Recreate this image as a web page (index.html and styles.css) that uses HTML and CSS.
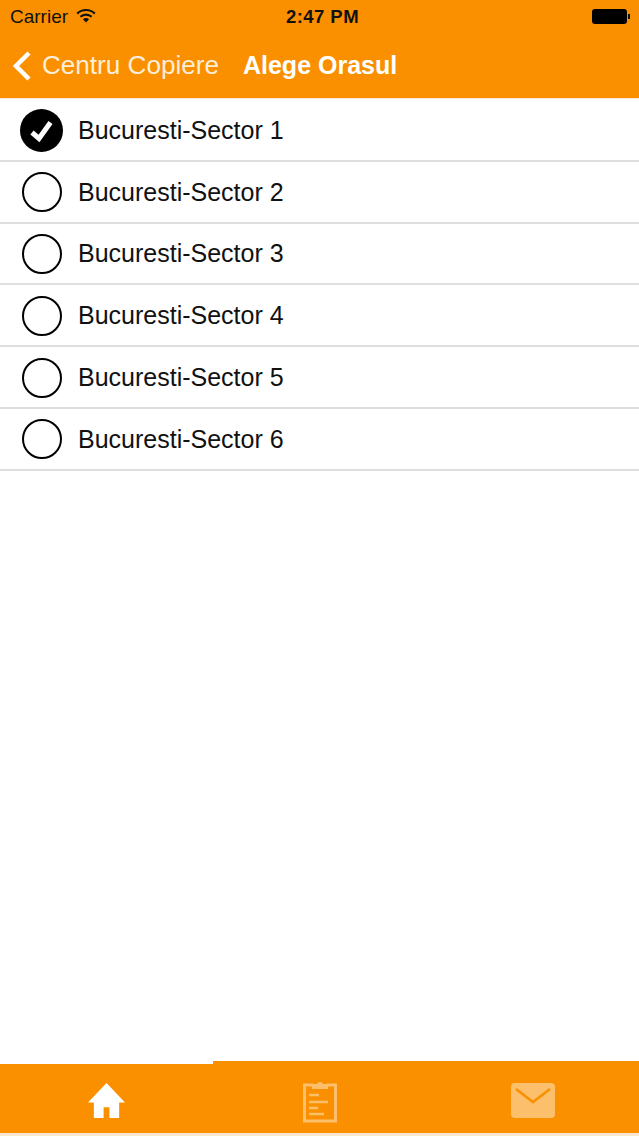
FILE: index.html
```html
<!DOCTYPE html>
<html lang="ro">
<head>
<meta charset="utf-8">
<title>Alege Orasul</title>
<link rel="stylesheet" href="styles.css">
</head>
<body>
<div class="app">
  <header class="header">
    <div class="status">
      <div class="status-left">
        <span class="carrier">Carrier</span>
        <svg class="wifi" viewBox="0 0 20 15"><path d="M1.2 5.6a12.6 12.6 0 0 1 17.6 0" fill="none" stroke="#111" stroke-width="2.2"/><path d="M4.4 8.8a8.2 8.2 0 0 1 11.2 0" fill="none" stroke="#111" stroke-width="2.2"/><path d="M6.9 11.3a4.6 4.6 0 0 1 6.2 0L10 14.6z" fill="#111"/></svg>
      </div>
      <span class="time">2:47 PM</span>
      <div class="battery"><span class="battery-body"></span><span class="battery-tip"></span></div>
    </div>
    <nav class="nav">
      <svg class="chevron" viewBox="0 0 20 30"><path d="M17 2 4 15l13 13" fill="none" stroke="#fff" stroke-width="4.5"/></svg>
      <span class="back">Centru Copiere</span>
      <span class="title">Alege Orasul</span>
    </nav>
  </header>
  <ul class="list">
    <li class="row"><span class="radio checked"><svg viewBox="0 0 43 43"><path d="M12 23.5l7 6 11.5-16" fill="none" stroke="#fff" stroke-width="5"/></svg></span><span class="label">Bucuresti-Sector 1</span></li>
    <li class="row"><span class="radio"></span><span class="label">Bucuresti-Sector 2</span></li>
    <li class="row"><span class="radio"></span><span class="label">Bucuresti-Sector 3</span></li>
    <li class="row"><span class="radio"></span><span class="label">Bucuresti-Sector 4</span></li>
    <li class="row"><span class="radio"></span><span class="label">Bucuresti-Sector 5</span></li>
    <li class="row"><span class="radio"></span><span class="label">Bucuresti-Sector 6</span></li>
  </ul>
  <footer class="tabs">
    <div class="tab tab-active">
      <svg class="icon-home" viewBox="0 0 38 38"><path d="M19 1 0 21h6v16h10V26h6v11h10V21h6z" fill="#fff"/></svg>
    </div>
    <div class="tab">
      <svg class="icon-clip" viewBox="0 0 34 44"><path d="M10 6H1.5v36h31V6H24" fill="none" stroke="#fcc06c" stroke-width="3"/><path d="M9 10V5h5a3.2 3.2 0 0 1 6 0h5v5z" fill="#fcc06c"/><path d="M6 16h10M6 23h19M6 29h9M6 35h15" stroke="#fcc06c" stroke-width="2.5"/></svg>
    </div>
    <div class="tab">
      <svg class="icon-mail" viewBox="0 0 44 35"><rect width="44" height="35" rx="4" fill="#fcc06c"/><path d="M5 6l17 13L39 6" fill="none" stroke="#fa9000" stroke-width="2.6"/></svg>
    </div>
  </footer>
</div>
</body>
</html>
```

FILE: styles.css
```css
* { box-sizing: border-box; }
html, body { margin: 0; padding: 0; background: #fff; }
.app {
  width: 639px;
  height: 1136px;
  display: flex;
  flex-direction: column;
  font-family: "Liberation Sans", Arial, sans-serif;
  overflow: hidden;
}
.header {
  height: 99px;
  flex: none;
  background: #fa9000;
  border-bottom: 1px solid #fbe6cf;
}
.status {
  height: 33px;
  padding: 0 9px 0 10px;
  display: grid;
  grid-template-columns: 1fr auto 1fr;
  align-items: center;
  color: #111;
}
.status-left { display: flex; align-items: center; gap: 8px; }
.carrier { font-size: 19px; }
.wifi { width: 20px; height: 15px; margin-bottom: 2px; }
.time { margin-left: 5px; font-size: 18.5px; font-weight: 700; letter-spacing: 0.45px; }
.battery { display: flex; align-items: center; justify-content: flex-end; }
.battery-body { width: 35px; height: 15px; background: #000; border-radius: 3px; }
.battery-tip { width: 2px; height: 5px; background: #111; margin-left: 1px; }
.nav {
  height: 65px;
  display: flex;
  align-items: center;
  padding-left: 12px;
  color: #fff;
}
.chevron { width: 20px; height: 30px; flex: none; }
.back { margin-left: 10px; font-size: 26.1px; color: #fdeedb; }
.title { margin-left: 24px; font-size: 25px; font-weight: 700; }
.list {
  list-style: none;
  margin: 0;
  padding: 1px 0 0;
  flex: 1;
}
.row {
  height: 61.8px;
  display: flex;
  align-items: center;
  padding-left: 20px;
  padding-top: 1px;
  border-bottom: 2px solid #dedede;
}
.radio {
  width: 40px;
  height: 40px;
  margin: 0 2px;
  flex: none;
  border-radius: 50%;
  border: 2px solid #000;
  background: #fff;
}
.radio.checked {
  width: 43px;
  height: 43px;
  margin: 0 1px 0 0;
  background: #000;
  border: 0;
}
.radio svg { display: block; width: 43px; height: 43px; }
.label { margin-left: 14px; font-size: 25px; color: #111; }
.tabs {
  height: 75px;
  flex: none;
  display: grid;
  grid-template-columns: 213px 213px 213px;
  background: #fa9000;
  border-bottom: 3px solid #fbe6cf;
}
.tab { display: flex; align-items: center; justify-content: center; padding-top: 7px; }
.tab-active { border-top: 3px solid #fff; padding-top: 4px; }
.icon-home { width: 37px; height: 37px; }
.icon-clip { width: 34px; height: 44px; }
.icon-mail { width: 44px; height: 35px; }
```
